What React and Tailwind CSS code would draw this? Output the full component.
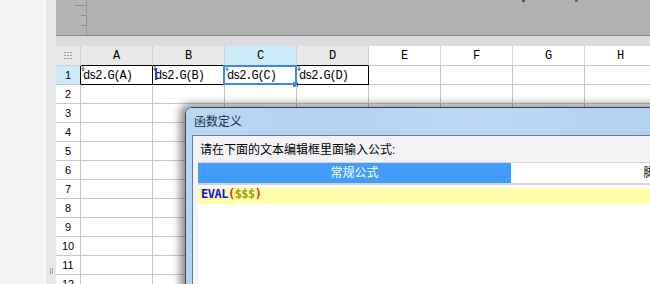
import React from "react";

const COLS = ["A", "B", "C", "D", "E", "F", "G", "H"];
const ROWS = [1, 2, 3, 4, 5, 6, 7, 8, 9, 10, 11, 12];

function Marker({ blue, teal }) {
  return (
    <>
      <svg className="absolute left-0 top-0" width="6" height="6" viewBox="0 0 6 6">
        <path d="M2 0 V4 M0.5 2.5 L2 4.5 L3.5 2.5" stroke={teal ? "#29b3a6" : "#7c7c7c"} strokeWidth="1.2" fill="none" />
      </svg>
      {blue && <div className="absolute left-[2px] top-[2px] w-[2px] h-[12px] bg-[#1d3df0]" />}
    </>
  );
}

export default function App() {
  return (
    <div className="relative w-[650px] h-[284px] overflow-hidden flex bg-white" style={{ fontFamily: '"Liberation Sans", "Noto Sans CJK SC", sans-serif' }}>
      <div className="w-[46px] h-full bg-[#f4f4f6] shrink-0" />
      <div className="w-[10px] h-full bg-[#e8e8e8] shrink-0 flex flex-col justify-end items-center pb-[10px]">
        <div className="flex gap-[1px]">
          <div className="w-px h-[6px] bg-[#a0a0a0]" />
          <div className="w-px h-[6px] bg-[#a0a0a0]" />
        </div>
      </div>
      <div className="flex-1 min-w-0 flex flex-col">
        {/* top gray area */}
        <div className="relative h-[36px] shrink-0 bg-[#b1b1b1] border-b border-[#8e8e8e] flex">
          <div className="w-[31px] h-full bg-[#b5b5b5] border-r border-[#9a9a9a] flex flex-col items-end pt-[5px] gap-[9px]">
            <div className="w-[11px] h-px bg-[#8a8a8a]" />
            <div className="w-[5px] h-px bg-[#8a8a8a]" />
            <div className="w-[5px] h-px bg-[#8a8a8a]" />
          </div>
          <div className="absolute left-[466px] top-0 w-[3px] h-[2px] bg-[#555]" />
          <div className="absolute left-[519px] top-0 w-[3px] h-[2px] bg-[#666]" />
        </div>
        <div className="h-[10px] shrink-0 bg-[#dcdcde]" />
        {/* header row */}
        <div className="flex h-[20px] shrink-0">
          <div className="w-[25px] shrink-0 bg-[#e8e8e8] border-r border-b border-[#d0d0d0] flex items-center justify-center">
            <div className="grid grid-cols-3 gap-[1.5px]">
              {Array.from({ length: 9 }).map((_, i) => (
                <div key={i} className="w-[1.5px] h-[1.5px] bg-[#9a9a9a]" />
              ))}
            </div>
          </div>
          {COLS.map((c, i) => (
            <div
              key={c}
              className={`w-[72px] shrink-0 border-r flex justify-center pt-[3px] text-[12px] leading-[14px] text-black ${
                i === 2 ? "bg-[#cdebf8] border-[#d0d0d0]" : i < 4 ? "bg-[#e9e9e9] border-[#d0d0d0]" : "bg-white border-[#d6d6d6]"
              } ${i < 4 ? "border-b border-b-black" : "border-b border-b-[#c6c6c6]"}`}
              style={{ fontFamily: '"Liberation Mono", monospace' }}
            >
              {c}
            </div>
          ))}
        </div>
        {/* body rows */}
        {ROWS.map((r) => (
          <div key={r} className="flex h-[19px] shrink-0">
            <div
              className={`w-[25px] shrink-0 border-b border-[#c6c6c6] flex items-center justify-center text-[11px] text-black pt-[1px] ${
                r === 1 ? "bg-[#cdeaf7] border-r border-r-black" : "bg-white border-r border-r-[#c6c6c6]"
              }`}
            >
              {r}
            </div>
            {COLS.map((c, i) => {
              const filled = r === 1 && i < 4;
              return (
                <div
                  key={c}
                  className={`relative w-[72px] shrink-0 border-r border-b ${filled ? "border-black" : "border-[#c6c6c6]"} flex items-center pl-[2px] pt-[2px] text-[12px] tracking-[-1.1px] text-black`}
                  style={{ fontFamily: '"Liberation Mono", monospace' }}
                >
                  {filled && (
                    <>
                      <Marker blue={i === 1} teal={i === 2} />
                      <span>{`ds2.G(${c})`}</span>
                    </>
                  )}
                  {filled && i === 2 && (
                    <div className="absolute left-[-2px] top-[-1px] w-[74px] h-[20px] border-2 border-[#3b86e6]">
                      <div className="absolute right-[-3px] bottom-[-4px] w-[5px] h-[5px] bg-[#3b86e6]" />
                    </div>
                  )}
                </div>
              );
            })}
          </div>
        ))}
      </div>

      {/* dialog */}
      <div className="absolute left-[185px] top-[107px] w-[480px] h-[190px] rounded-tl-[7px] border border-[#3e4b5a] bg-gradient-to-b from-[#bcd9f6] to-[#b3d2f1] shadow-[-3px_-1px_9px_2px_rgba(0,0,0,0.45)] flex flex-col">
        <div className="h-[27px] shrink-0 flex items-center pl-[8px] text-[12px] text-[#1f2f44] bg-[linear-gradient(90deg,#b9d7f5_0%,#b3d3f3_30%,#bad8f6_60%,#b2d2f2_100%)] rounded-tl-[6px]">
          函数定义
        </div>
        <div className="flex-1 ml-[6px] border-l border-t border-[#6d7c8d] bg-[#f3f3f5] pl-[5px] flex flex-col">
          <div className="h-[26px] shrink-0 pt-[7px] pl-[2px] text-[12px] leading-[14px] text-black">
            请在下面的文本编辑框里面输入公式:
          </div>
          <div className="flex h-[23px] shrink-0 border-t border-[#d6d6d6] border-b-2 border-b-[#d4d4d4]">
            <div className="w-[313px] shrink-0 bg-[#429cf9] text-white text-[12px] flex items-center justify-center">常规公式</div>
            <div className="w-[313px] shrink-0 bg-white text-black text-[12px] flex items-center justify-center">脚本公式</div>
          </div>
          <div className="flex-1 bg-white pt-[3px]">
            <div
              className="h-[16px] bg-[#ffffaa] pl-[3px] text-[12px] leading-[12px] tracking-[-0.5px] font-bold"
              style={{ fontFamily: '"DejaVu Sans Mono", monospace' }}
            >
              <span className="text-[#0a12e8]">EVAL</span>
              <span className="text-[#ff1a1a]">(</span>
              <span className="text-[#a3a000]">$$$</span>
              <span className="text-[#ff1a1a]">)</span>
            </div>
          </div>
        </div>
      </div>
    </div>
  );
}
